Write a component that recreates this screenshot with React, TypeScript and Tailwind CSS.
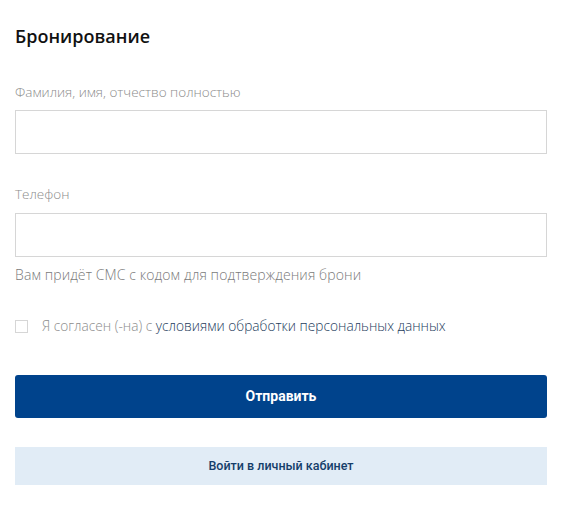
export default function App() {
  return (
    <div className="w-[576px] h-[524px] bg-white px-[15px] pt-[24px] font-['Open_Sans',sans-serif]">
      <h2 className="text-[18px] leading-[24px] font-semibold text-[#111]">Бронирование</h2>

      <form className="mt-[34px]" onSubmit={(e) => e.preventDefault()}>
        <label className="block text-[13.5px] leading-[20px] font-light text-[#8c8c8c]">
          Фамилия, имя, отчество полностью
        </label>
        <input
          type="text"
          className="mt-[8px] block w-[532px] h-[44px] border border-[#d6d6d6] outline-none px-3 text-[14px]"
        />

        <label className="block mt-[30px] text-[13.5px] leading-[20px] font-light text-[#8c8c8c]">
          Телефон
        </label>
        <input
          type="tel"
          className="mt-[9px] block w-[532px] h-[44px] border border-[#d6d6d6] outline-none px-3 text-[14px]"
        />
        <p className="mt-[8px] text-[14px] tracking-[0.1px] leading-[20px] font-light text-[#7a7a7a]">
          Вам придёт СМС с кодом для подтверждения брони
        </p>

        <label className="mt-[31px] flex items-center gap-[14px] text-[13.7px] leading-[20px] font-light text-[#8c8c8c]">
          <span className="block w-[13px] h-[13px] border border-[#d6d6d6] bg-white" />
          <span>
            Я согласен (-на) с{" "}
            <a href="#" className="text-[#1d3c5c]">
              условиями обработки персональных данных
            </a>
          </span>
        </label>

        <button
          type="submit"
          className="mt-[39px] flex items-center justify-center w-[532px] h-[43px] rounded-[3px] bg-[#00438c] text-white text-[14px] font-bold font-['Roboto',sans-serif]"
        >
          Отправить
        </button>

        <button
          type="button"
          className="mt-[29px] flex items-center justify-center w-[532px] h-[38px] bg-[#e1ecf6] text-[#153e6a] text-[12.5px] font-medium font-['Roboto',sans-serif]"
        >
          Войти в личный кабинет
        </button>
      </form>
    </div>
  );
}
